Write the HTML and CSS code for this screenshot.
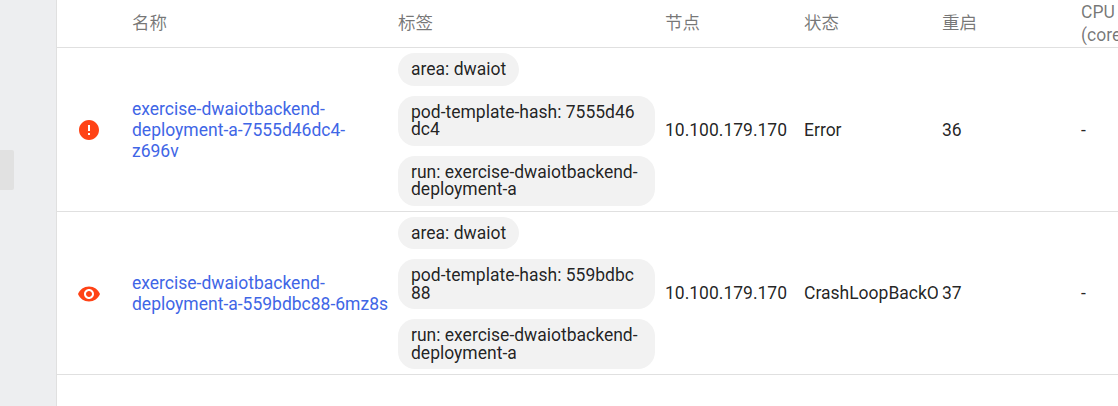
FILE: index.html
```html
<!DOCTYPE html>
<html lang="zh">
<head>
<meta charset="utf-8">
<title>Pods</title>
<link rel="stylesheet" href="styles.css">
</head>
<body>
<div class="page">
  <aside class="side"><div class="handle"></div></aside>
  <main class="main">
    <table class="pods">
      <colgroup>
        <col class="c-icon"><col class="c-name"><col class="c-labels"><col class="c-node"><col class="c-status"><col class="c-restart"><col class="c-cpu">
      </colgroup>
      <thead>
        <tr>
          <th></th><th>名称</th><th>标签</th><th>节点</th><th>状态</th><th>重启</th><th>CPU<br>(cores)</th>
        </tr>
      </thead>
      <tbody>
        <tr>
          <td class="icon-cell">
            <svg class="icon" viewBox="0 0 24 24"><path d="M12 2C6.48 2 2 6.48 2 12s4.48 10 10 10 10-4.48 10-10S17.52 2 12 2zm1 15h-2v-2h2v2zm0-4h-2V7h2v6z"/></svg>
          </td>
          <td class="name-cell"><a class="link" href="#">exercise-dwaiotbackend-deployment-a-7555d46dc4-z696v</a></td>
          <td class="chip-cell">
            <div class="chips">
              <span class="chip">area: dwaiot</span>
              <span class="chip">pod-template-hash: 7555d46dc4</span>
              <span class="chip">run: exercise-dwaiotbackend-deployment-a</span>
            </div>
          </td>
          <td>10.100.179.170</td>
          <td><div class="clip">Error</div></td>
          <td>36</td>
          <td>-</td>
        </tr>
        <tr>
          <td class="icon-cell">
            <svg class="icon" viewBox="0 0 24 24"><path d="M12 4.5C7 4.5 2.73 7.61 1 12c1.73 4.39 6 7.5 11 7.5s9.27-3.11 11-7.5c-1.73-4.39-6-7.5-11-7.5zM12 17c-2.76 0-5-2.24-5-5s2.24-5 5-5 5 2.24 5 5-2.24 5-5 5zm0-8c-1.66 0-3 1.34-3 3s1.34 3 3 3 3-1.34 3-3-1.34-3-3-3z"/></svg>
          </td>
          <td class="name-cell"><a class="link" href="#">exercise-dwaiotbackend-deployment-a-559bdbc88-6mz8s</a></td>
          <td class="chip-cell">
            <div class="chips">
              <span class="chip">area: dwaiot</span>
              <span class="chip">pod-template-hash: 559bdbc88</span>
              <span class="chip">run: exercise-dwaiotbackend-deployment-a</span>
            </div>
          </td>
          <td>10.100.179.170</td>
          <td><div class="clip">CrashLoopBackOff</div></td>
          <td>37</td>
          <td>-</td>
        </tr>
      </tbody>
    </table>
  </main>
</div>
</body>
</html>
```
FILE: styles.css
```css
html, body {
  margin: 0;
  height: 100%;
  overflow: hidden;
}
body {
  font-family: Roboto, "Noto Sans CJK SC", sans-serif;
  font-size: 17.5px;
  color: rgba(0, 0, 0, 0.87);
  background: #fff;
}
.page {
  display: flex;
  height: 100%;
}
.side {
  width: 56px;
  flex: none;
  background: #edeef0;
  border-right: 1px solid #e0e0e0;
  padding-top: 150px;
  box-sizing: content-box;
}
.handle {
  width: 14px;
  height: 40px;
  background: #e1e1e1;
  border-radius: 0 2px 2px 0;
}
.main {
  flex: 1;
  min-width: 0;
  overflow: hidden;
  background: #fff;
}
.pods {
  table-layout: fixed;
  border-collapse: separate;
  border-spacing: 0;
  width: 1161px;
}
.c-icon { width: 75px; }
.c-name { width: 266px; }
.c-labels { width: 267px; }
.c-node { width: 139px; }
.c-status { width: 138px; }
.c-restart { width: 139px; }
.c-cpu { width: 137px; }
th {
  height: 47px;
  padding: 0;
  font-weight: 400;
  font-size: 17.5px;
  line-height: 23px;
  text-align: left;
  color: rgba(0, 0, 0, 0.54);
  border-bottom: 1px solid #e0e0e0;
  white-space: nowrap;
}
td {
  padding: 2px 0 0;
  line-height: 21px;
  vertical-align: middle;
  border-bottom: 1px solid #e0e0e0;
}
.chip-cell { padding: 0; }
.icon-cell { padding-left: 20px; }
.icon {
  display: block;
  width: 24px;
  height: 24px;
  fill: #ff4316;
}
.name-cell { padding-right: 9px; }
.link {
  color: #3f66e6;
  text-decoration: none;
}
.chips {
  display: flex;
  flex-direction: column;
  align-items: flex-start;
  gap: 10px;
  padding: 5px 0;
}
.chip {
  box-sizing: border-box;
  max-width: 257px;
  padding: 8px 13px 7px;
  border-radius: 17px;
  background: #f2f2f2;
  line-height: 17.5px;
  word-break: break-all;
}
.clip {
  margin-right: 4px;
  overflow: hidden;
  white-space: nowrap;
}
```
